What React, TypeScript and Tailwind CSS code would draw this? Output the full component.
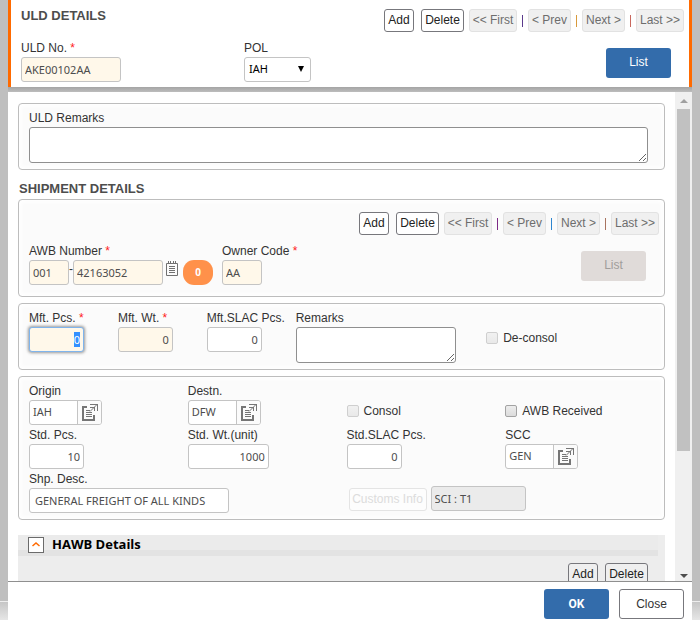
import { useEffect, useRef } from "react";
import type { ComponentProps, ReactNode } from "react";
import { clsx } from "clsx";

const inputBase =
  "h-[25px] rounded-[3px] border border-[#c4c4c4] px-[3px] font-['Noto_Sans',sans-serif] text-[11px] text-[#4d4d4d] outline-none";

function Label({ htmlFor, required, children }: { htmlFor: string; required?: boolean; children: ReactNode }) {
  return (
    <label htmlFor={htmlFor} className="block h-[19px] text-xs leading-[21px] whitespace-nowrap">
      {children}
      {required && <span className="text-[#ff1a1a]"> *</span>}
    </label>
  );
}

function TextInput({ className, ...rest }: ComponentProps<"input">) {
  return <input type="text" className={clsx(inputBase, className)} {...rest} />;
}

function SmallButton({ children, width, filled }: { children: ReactNode; width: string; filled?: boolean }) {
  return (
    <button
      type="button"
      className={clsx(
        "h-[23px] shrink-0 rounded-[3px] border border-[#77777c] text-center text-xs leading-[21px] whitespace-nowrap text-[#222]",
        filled ? "bg-[#efefef]" : "bg-white",
        width,
      )}
    >
      {children}
    </button>
  );
}

function NavButton({ children, width }: { children: ReactNode; width: string }) {
  return (
    <button
      type="button"
      disabled
      className={clsx(
        "h-[23px] shrink-0 rounded-[3px] border border-[#e2e2e2] bg-[#f0f0f0] text-center text-xs leading-[21px] whitespace-nowrap text-[#6d6d6d]",
        width,
      )}
    >
      {children}
    </button>
  );
}

function Separator({ color }: { color: string }) {
  return <span className={clsx("h-3 w-px", color)} />;
}

function Pager({ colors }: { colors: [string, string, string] }) {
  return (
    <div className="flex items-center justify-end gap-[5px]">
      <div className="flex gap-[7px]">
        <SmallButton width="w-[30px]">Add</SmallButton>
        <SmallButton width="w-[43px]">Delete</SmallButton>
      </div>
      <NavButton width="w-12">&lt;&lt; First</NavButton>
      <Separator color={colors[0]} />
      <NavButton width="w-[43px]">&lt; Prev</NavButton>
      <Separator color={colors[1]} />
      <NavButton width="w-[43px]">Next &gt;</NavButton>
      <Separator color={colors[2]} />
      <NavButton width="w-12">Last &gt;&gt;</NavButton>
    </div>
  );
}

function Card({ className, children }: { className?: string; children: ReactNode }) {
  return (
    <section
      className={clsx(
        "rounded-[4px] border border-[#bdbdbd] bg-[#fbfbfb] pl-2.5 shadow-[inset_0_0_4px_2px_#fff]",
        className,
      )}
    >
      {children}
    </section>
  );
}

function LookupIcon() {
  return (
    <svg width="17" height="19" viewBox="0 0 17 19" fill="none" stroke="#757575" aria-hidden="true">
      <path d="M6 4H2v13h11V12" strokeWidth="2" />
      <path d="M5 7.500h4M5 9.500h6M5 11.500h6M5 13.500h6" />
      <path d="M9 1.500h7.500M16.500 1v7M9 4.500h4.500M13.500 4v4" />
      <path d="M9 8.500L16 1.500" />
    </svg>
  );
}

function NotepadIcon() {
  return (
    <svg width="12" height="15" viewBox="0 0 12 15" fill="none" stroke="#707070" aria-hidden="true">
      <path d="M0.500 2.500h11v12h-11z" />
      <path d="M2.500 0v3M4.500 0v3M7.500 0v3M9.500 0v3" />
      <path d="M3 5.500h6M3 7.500h6M3 9.500h6M3 11.500h6" />
    </svg>
  );
}

function LookupField({ id, value }: { id: string; value: string }) {
  return (
    <div className="flex h-[25px] w-[73px] overflow-hidden rounded-[3px] border border-[#c4c4c4] bg-white">
      <input
        id={id}
        type="text"
        defaultValue={value}
        className="w-[47px] px-[3px] font-['Noto_Sans',sans-serif] text-[11px] text-[#4d4d4d] outline-none"
      />
      <button
        type="button"
        aria-label="Look up"
        className="flex flex-1 items-center justify-center border-l border-[#c4c4c4] bg-[#fbfbfb]"
      >
        <LookupIcon />
      </button>
    </div>
  );
}

function CheckField({ id, label, disabled }: { id: string; label: string; disabled?: boolean }) {
  return (
    <div className="flex items-center gap-[5px]">
      <input
        id={id}
        type="checkbox"
        disabled={disabled}
        className={clsx(
          "size-3 appearance-none rounded-[2px] border bg-linear-to-b",
          disabled ? "border-[#cfcfcf] from-[#f1f1f1] to-[#e9e9e9]" : "border-[#a3a3a3] from-[#ededed] to-[#dcdcdc]",
        )}
      />
      <label htmlFor={id} className="h-[19px] text-xs leading-[21px]">
        {label}
      </label>
    </div>
  );
}

const remarksBox =
  "block h-9 resize rounded-[3px] border border-[#8f8f8f] bg-white px-1 font-['Noto_Sans',sans-serif] text-[11px] outline-none";

export default function App() {
  const pieces = useRef<HTMLInputElement>(null);

  useEffect(() => {
    pieces.current?.focus({ preventScroll: true });
    pieces.current?.select();
  }, []);

  return (
    <div className="flex h-screen flex-col bg-[#bfbfbf] font-['Liberation_Sans',Arial,sans-serif] text-xs text-[#333]">
      <div className="flex min-h-0 flex-1">
        <div className="flex w-2 flex-col justify-end">
          <div className="h-[19px] border-t border-[#eee] bg-linear-to-b from-[#c6c6c6] to-[#e6e6e6]" />
        </div>

        <main className="flex min-w-0 flex-1 flex-col bg-white">
          <header className="border-x-[3px] border-[#ff6a00] bg-white pt-[9px] pr-[5px] pb-[5px] pl-2.5">
            <div className="flex justify-between">
              <h1 className="text-[13px] leading-[13px] font-bold text-[#4d4d4d]">ULD DETAILS</h1>
              <Pager colors={["bg-[#5b3a8c]", "bg-[#d89a3c]", "bg-[#c9685e]"]} />
            </div>
            <div className="mt-[6px] flex items-end justify-between pr-[13px]">
              <div className="flex">
                <div className="w-[223px]">
                  <Label htmlFor="uld" required>
                    ULD No.
                  </Label>
                  <TextInput id="uld" className="w-[100px] bg-[#fff8ea]" defaultValue="AKE00102AA" />
                </div>
                <div>
                  <Label htmlFor="pol">POL</Label>
                  <div className="relative">
                    <select
                      id="pol"
                      className="h-[25px] w-[67px] appearance-none rounded-[3px] border border-[#c4c4c4] bg-white px-1 font-['Noto_Sans',sans-serif] text-[11px] text-black"
                    >
                      <option>IAH</option>
                    </select>
                    <span className="pointer-events-none absolute top-[9px] right-[7px] size-0 border-x-[3px] border-t-[6px] border-x-transparent border-t-black" />
                  </div>
                </div>
              </div>
              <button
                type="button"
                className="mb-1 h-[30px] w-[65px] rounded-[3px] bg-[#336cab] pb-[3px] text-xs text-white"
              >
                List
              </button>
            </div>
          </header>

          <div className="h-[5px] shrink-0 bg-linear-to-b from-[#a4a4a4] to-[#bdbdbd]" />

          <div className="flex min-h-0 flex-1">
            <div className="min-w-0 flex-1 overflow-hidden px-2.5 pt-[11px]">
              <Card className="pt-1 pr-4 pb-[6px]">
                <Label htmlFor="uld-remarks">ULD Remarks</Label>
                <textarea id="uld-remarks" className={clsx(remarksBox, "w-full")} />
              </Card>

              <h2 className="pt-[9px] pl-px text-[13px] leading-5 font-bold text-[#4d4d4d]">SHIPMENT DETAILS</h2>

              <Card className="pt-3 pr-[5px] pb-[11px]">
                <Pager colors={["bg-[#7d2a86]", "bg-[#2f86cf]", "bg-[#a8735f]"]} />
                <div className="mt-[6px] flex items-end justify-between pr-[13px]">
                  <div className="flex">
                    <div className="w-[193px]">
                      <Label htmlFor="awb" required>
                        AWB Number
                      </Label>
                      <div className="flex">
                        <TextInput
                          aria-label="AWB prefix"
                          className="w-10 bg-[#fff8ea]"
                          defaultValue="001"
                        />
                        <span className="w-1 text-center leading-[18px]">-</span>
                        <TextInput id="awb" className="w-[90px] bg-[#fff8ea]" defaultValue="42163052" />
                        <button type="button" aria-label="Notes" className="ml-[3px] h-4 pt-px">
                          <NotepadIcon />
                        </button>
                        <span className="ml-[5px] h-[25px] w-[30px] rounded-[11px] bg-[#ff914a] text-center font-['Noto_Sans',sans-serif] text-[10px] leading-[25px] font-bold text-white">
                          0
                        </span>
                      </div>
                    </div>
                    <div>
                      <Label htmlFor="owner" required>
                        Owner Code
                      </Label>
                      <TextInput id="owner" className="w-10 bg-[#fff8ea]" defaultValue="AA" />
                    </div>
                  </div>
                  <button
                    type="button"
                    disabled
                    className="mb-1 h-[30px] w-[65px] rounded-[3px] bg-[#e0dbd9] pb-[3px] text-xs text-[#a09d9b]"
                  >
                    List
                  </button>
                </div>
              </Card>

              <Card className="mt-[6px] grid grid-cols-[14%_14%_14%_30%_1fr] pt-1 pb-[6px]">
                <div>
                  <Label htmlFor="mft-pcs" required>
                    Mft. Pcs.
                  </Label>
                  <input
                    id="mft-pcs"
                    ref={pieces}
                    type="text"
                    defaultValue="0"
                    className="h-[25px] w-[55px] rounded-[3px] border border-[#7fb4ec] bg-[#fff8ea] px-[3px] text-right font-['Noto_Sans',sans-serif] text-[11px] shadow-[0_0_3px_1px_#999] outline-none selection:bg-[#3390ff] selection:text-white"
                  />
                </div>
                <div>
                  <Label htmlFor="mft-wt" required>
                    Mft. Wt.
                  </Label>
                  <TextInput id="mft-wt" className="w-[55px] bg-[#fff8ea] text-right" defaultValue="0" />
                </div>
                <div>
                  <Label htmlFor="mft-slac">Mft.SLAC Pcs.</Label>
                  <TextInput id="mft-slac" className="w-[55px] bg-white text-right" defaultValue="0" />
                </div>
                <div>
                  <Label htmlFor="remarks">Remarks</Label>
                  <textarea id="remarks" className={clsx(remarksBox, "w-40")} />
                </div>
                <div className="pt-5">
                  <CheckField id="deconsol" label="De-consol" disabled />
                </div>
              </Card>

              <Card className="mt-[6px] grid grid-cols-4 pt-1 pb-[6px]">
                <div>
                  <Label htmlFor="origin">Origin</Label>
                  <LookupField id="origin" value="IAH" />
                </div>
                <div>
                  <Label htmlFor="destn">Destn.</Label>
                  <LookupField id="destn" value="DFW" />
                </div>
                <div className="pt-5">
                  <CheckField id="consol" label="Consol" disabled />
                </div>
                <div className="pt-5">
                  <CheckField id="received" label="AWB Received" />
                </div>

                <div>
                  <Label htmlFor="std-pcs">Std. Pcs.</Label>
                  <TextInput id="std-pcs" className="w-[55px] bg-white text-right" defaultValue="10" />
                </div>
                <div>
                  <Label htmlFor="std-wt">Std. Wt.(unit)</Label>
                  <TextInput id="std-wt" className="w-[81px] bg-white text-right" defaultValue="1000" />
                </div>
                <div>
                  <Label htmlFor="std-slac">Std.SLAC Pcs.</Label>
                  <TextInput id="std-slac" className="w-[55px] bg-white text-right" defaultValue="0" />
                </div>
                <div>
                  <Label htmlFor="scc">SCC</Label>
                  <LookupField id="scc" value="GEN" />
                </div>

                <div className="col-span-2">
                  <Label htmlFor="desc">Shp. Desc.</Label>
                  <TextInput
                    id="desc"
                    className="w-[200px] bg-white pl-[5px]"
                    defaultValue="GENERAL FREIGHT OF ALL KINDS"
                  />
                </div>
                <div className="col-span-2 flex items-end gap-1 pb-0.5 pl-0.5">
                  <button
                    type="button"
                    disabled
                    className="h-[23px] w-[78px] rounded-[3px] border border-[#e4e4e4] bg-[#fdfdfd] text-xs leading-[21px] whitespace-nowrap text-[#dcdcdc]"
                  >
                    Customs Info
                  </button>
                  <TextInput
                    aria-label="Special customs information"
                    readOnly
                    className="w-[95px] bg-[#ebebeb]"
                    defaultValue="SCI : T1"
                  />
                </div>
              </Card>

              <section className="mt-[15px] h-20 bg-[#ededed]">
                <div className="mr-[7px] flex h-[21px] items-center gap-2 border-b-[6px] border-[#e3e3e3] bg-[#ebebeb] pl-2.5">
                  <button
                    type="button"
                    aria-label="Collapse HAWB Details"
                    className="mt-1 flex size-4 shrink-0 items-center justify-center border border-[#6b6b6b] bg-white"
                  >
                    <svg width="8" height="5" viewBox="0 0 8 5" fill="none" stroke="#ff6a00" strokeWidth="1.500">
                      <path d="M0.500 4L4 1l3.500 3" />
                    </svg>
                  </button>
                  <h2 className="mt-0.5 font-['Open_Sans',sans-serif] text-[13px] leading-4 font-bold text-black">
                    HAWB Details
                  </h2>
                </div>
                <div className="flex justify-end gap-[7px] pt-[7px] pr-[17px]">
                  <SmallButton width="w-[30px]" filled>
                    Add
                  </SmallButton>
                  <SmallButton width="w-[43px]" filled>
                    Delete
                  </SmallButton>
                </div>
              </section>
            </div>

            <div className="flex w-[17px] flex-col items-center justify-between bg-[#f0f0f0]" aria-hidden="true">
              <div className="flex h-[17px] items-center">
                <span className="size-0 border-x-4 border-b-4 border-x-transparent border-b-[#a0a0a0]" />
              </div>
              <div className="flex w-full flex-1 flex-col px-0.5">
                <div className="h-[74%] bg-[#c1c1c1]" />
              </div>
              <div className="flex h-2.5 items-center">
                <span className="size-0 border-x-4 border-t-4 border-x-transparent border-t-[#4d4d4d]" />
              </div>
            </div>
          </div>

          <footer className="flex justify-end gap-2.5 border-t border-[#8f8f8f] bg-white pt-[7px] pr-2 pb-px">
            <button type="button" className="h-[30px] w-[65px] rounded-[3px] bg-[#336cab] font-[Roboto,sans-serif] text-xs font-bold text-white">
              OK
            </button>
            <button
              type="button"
              className="h-[30px] w-[65px] rounded-[3px] border border-[#77777c] bg-white text-xs text-[#333]"
            >
              Close
            </button>
          </footer>
        </main>

        <div className="flex w-2 flex-col justify-end">
          <div className="h-[19px] border-t border-[#eee] bg-linear-to-b from-[#c6c6c6] to-[#e6e6e6]" />
        </div>
      </div>
    </div>
  );
}
